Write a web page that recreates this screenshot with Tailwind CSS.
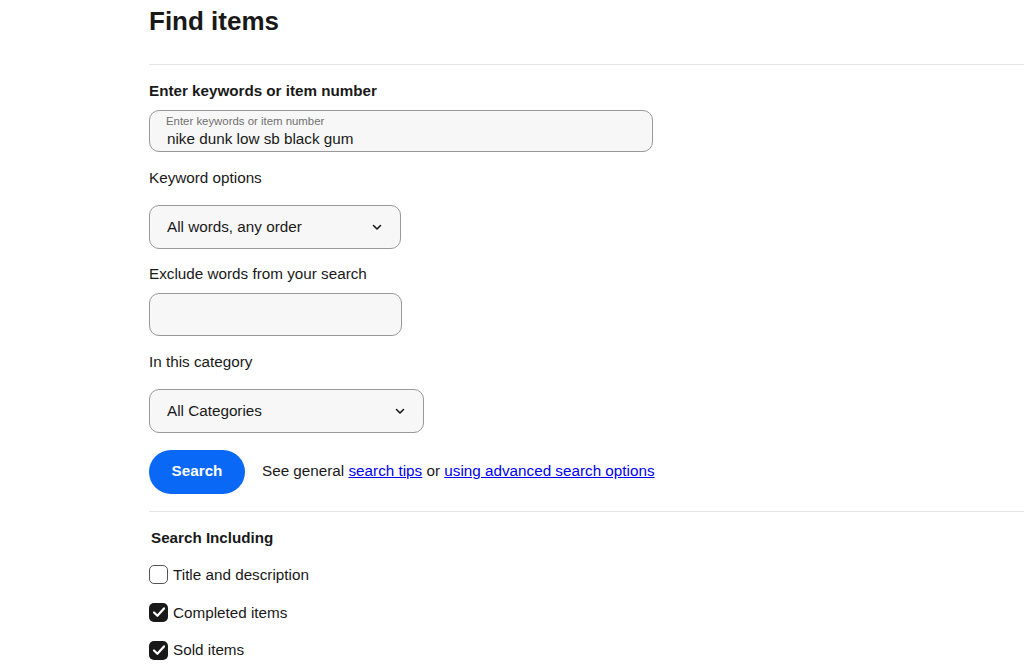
<!DOCTYPE html>
<html lang="en">
<head>
  <meta charset="UTF-8">
  <title>Find items</title>
  <script src="https://cdn.jsdelivr.net/npm/@tailwindcss/browser@4"></script>
</head>
<body class="bg-white text-[#191919] font-['Liberation_Sans',Arial,sans-serif] overflow-hidden h-[669px]">
  <div class="pl-[149px]">
    <h1 class="text-[26px] leading-[32px] font-bold pt-[5px] h-[64px]">Find items</h1>
    <div class="border-t border-[#e5e5e5] pt-[16px]">
      <label class="block text-[15.2px] leading-[20px] font-bold">Enter keywords or item number</label>
      <div class="mt-[9px] w-[504px] h-[42px] rounded-[10px] border border-[#999] bg-[#f7f7f7] pl-[16px] pt-[3px]">
        <div class="text-[11.4px] leading-[14px] text-[#707070]">Enter keywords or item number</div>
        <div class="text-[15.25px] leading-[19px] pl-[1px] pt-[1px]">nike dunk low sb black gum</div>
      </div>
      <div class="mt-[16px] text-[15.25px] leading-[20px]">Keyword options</div>
      <div class="mt-[17px] w-[252px] h-[44px] rounded-[10px] border border-[#999] bg-[#f7f7f7] pl-[17px] pr-[17px] flex items-center justify-between text-[15.25px]">
        <span>All words, any order</span>
        <svg class="w-[12px] h-[12px]" viewBox="0 0 12 12" fill="none" stroke="#191919" stroke-width="1.6" stroke-linecap="round" stroke-linejoin="round"><path d="M2.5 4.5 6 8l3.5-3.5"/></svg>
      </div>
      <div class="mt-[15px] text-[15.25px] leading-[20px]">Exclude words from your search</div>
      <div class="mt-[9px] w-[253px] h-[43px] rounded-[10px] border border-[#999] bg-[#f7f7f7]"></div>
      <div class="mt-[16px] text-[15.25px] leading-[20px]">In this category</div>
      <div class="mt-[17px] w-[275px] h-[44px] rounded-[10px] border border-[#999] bg-[#f7f7f7] pl-[17px] pr-[17px] flex items-center justify-between text-[15.25px]">
        <span>All Categories</span>
        <svg class="w-[12px] h-[12px]" viewBox="0 0 12 12" fill="none" stroke="#191919" stroke-width="1.6" stroke-linecap="round" stroke-linejoin="round"><path d="M2.5 4.5 6 8l3.5-3.5"/></svg>
      </div>
      <div class="mt-[17px] flex items-center text-[15.25px]">
        <button class="w-[96px] h-[44px] rounded-full bg-[#0968f6] text-white font-bold pb-[1px]">Search</button>
        <p class="ml-[17px] pb-[2px]">See general <a href="#" class="text-[#0000ee] underline">search tips</a> or <a href="#" class="text-[#0000ee] underline">using advanced search options</a></p>
      </div>
    </div>
    <div class="mt-[17px] border-t border-[#e5e5e5] pt-[16px]">
      <div class="pl-[2px] text-[15.2px] leading-[20px] font-bold">Search Including</div>
      <div class="mt-[17px] h-[20px] flex items-center gap-[5px] text-[15.25px] leading-[20px]">
        <span class="w-[19px] h-[19px] mb-[2px] rounded-[5px] border border-[#555] bg-white"></span>
        <span>Title and description</span>
      </div>
      <div class="mt-[18px] h-[20px] flex items-center gap-[5px] text-[15.25px] leading-[20px]">
        <span class="w-[19px] h-[19px] mb-[2px] rounded-[5px] bg-[#191919] flex items-center justify-center">
          <svg class="w-[14px] h-[14px]" viewBox="0 0 14 14" fill="none" stroke="#fff" stroke-width="2.2" stroke-linecap="round" stroke-linejoin="round"><path d="M2 7.5 5.4 10.8 12 3.4"/></svg>
        </span>
        <span>Completed items</span>
      </div>
      <div class="mt-[17px] h-[20px] flex items-center gap-[5px] text-[15.25px] leading-[20px]">
        <span class="w-[19px] h-[19px] rounded-[5px] bg-[#191919] flex items-center justify-center">
          <svg class="w-[14px] h-[14px]" viewBox="0 0 14 14" fill="none" stroke="#fff" stroke-width="2.2" stroke-linecap="round" stroke-linejoin="round"><path d="M2 7.5 5.4 10.8 12 3.4"/></svg>
        </span>
        <span>Sold items</span>
      </div>
    </div>
  </div>
</body>
</html>
